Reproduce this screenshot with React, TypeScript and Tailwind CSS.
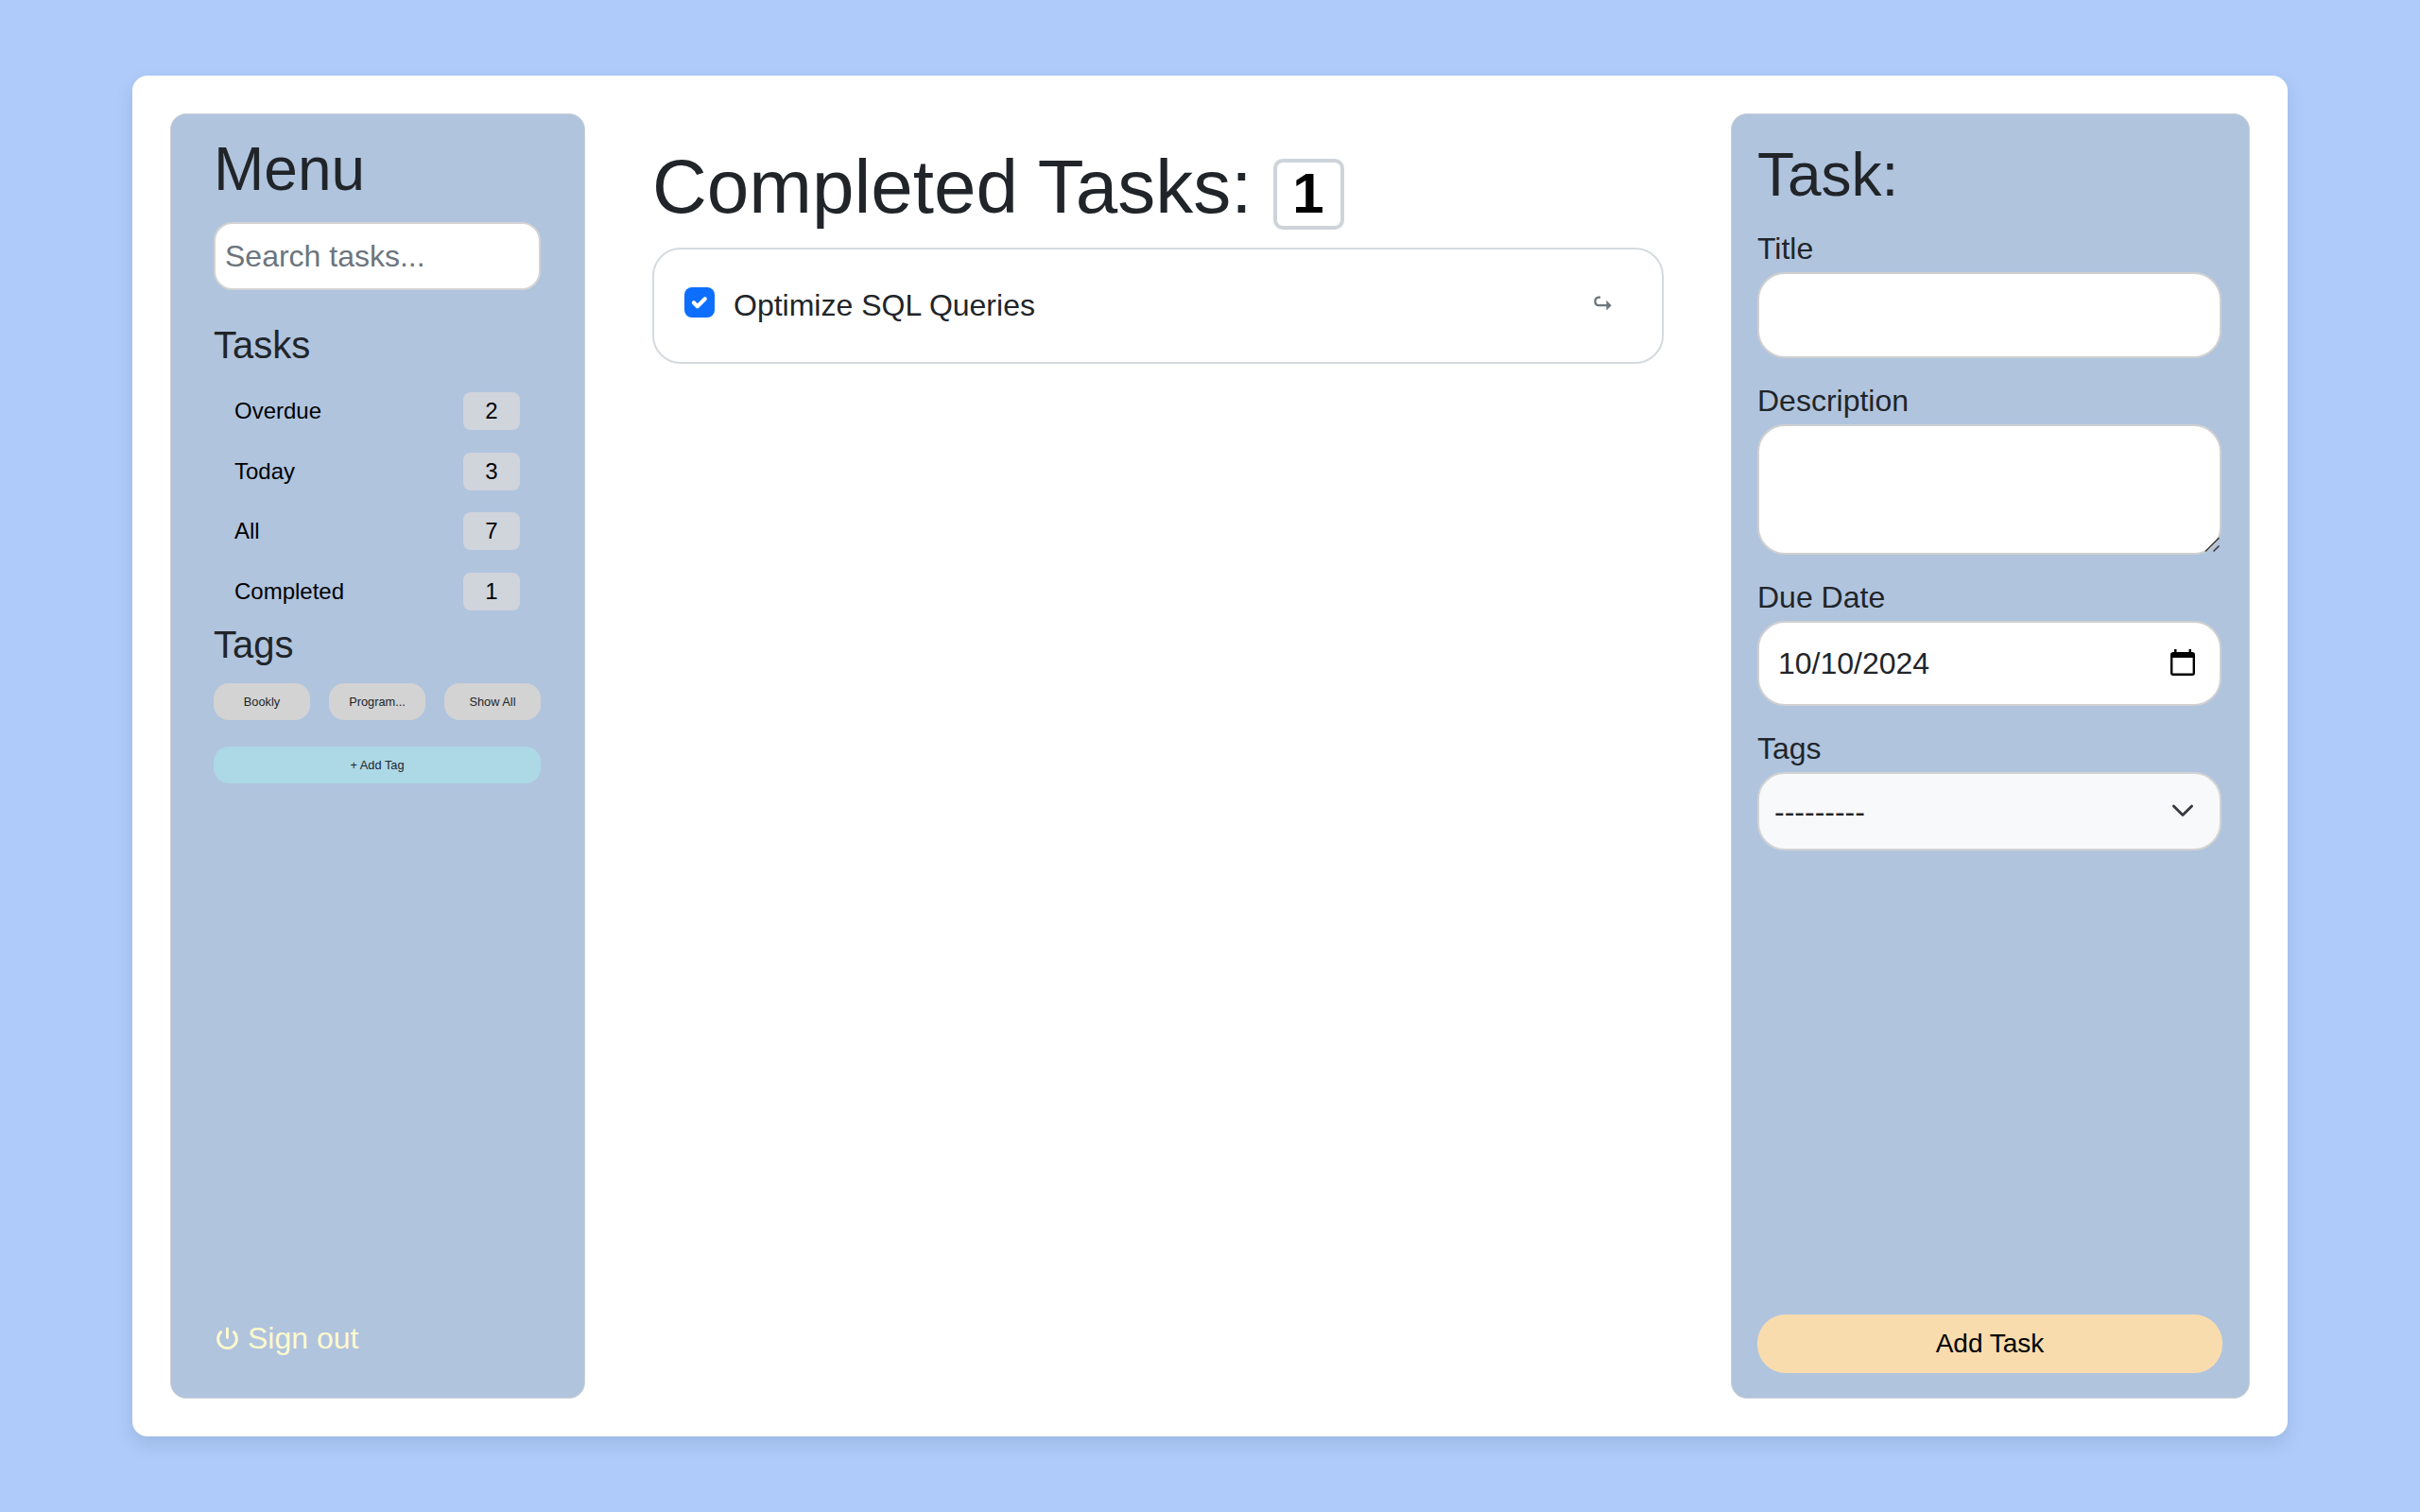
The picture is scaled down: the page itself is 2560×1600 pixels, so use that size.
import React from "react";

const counts = [
  { label: "Overdue", n: 2 },
  { label: "Today", n: 3 },
  { label: "All", n: 7 },
  { label: "Completed", n: 1 },
];
const tags = ["Bookly", "Program...", "Show All"];

function Sidebar() {
  return (
    <aside className="flex h-[1360px] w-[439px] flex-col rounded-[17px] border border-[#cdd0d6] bg-[#b0c4de] px-[45px]">
      <h2 className="mt-[20px] h-[77px] text-[64px] leading-[77px]">Menu</h2>
      <input
        className="mt-[17px] h-[72px] w-[346px] rounded-[20px] border-2 border-[#d3d3d3] bg-white px-[10px] text-[32px] placeholder:text-[#6c757d] placeholder:opacity-100"
        placeholder="Search tasks..."
      />
      <h5 className="mt-[34px] h-[48px] text-[40px] leading-[48px]">Tasks</h5>
      <ul className="mt-[26px] flex flex-col gap-[23.7px] pr-[23px] pl-[22px] text-[24px] text-black">
        {counts.map((c) => (
          <li key={c.label} className="flex h-10 items-center justify-between">
            <span>{c.label}</span>
            <span className="flex h-10 w-[60px] items-center justify-center rounded-[8px] bg-[#d0d4db]">{c.n}</span>
          </li>
        ))}
      </ul>
      <h5 className="mt-[12px] h-[48px] text-[40px] leading-[48px]">Tags</h5>
      <div className="mt-[17px] grid w-[346px] grid-cols-3 gap-5 text-center text-[12.8px] leading-[39px]">
        {tags.map((t) => (
          <div key={t} className="h-[39px] rounded-[16px] bg-[#d3d3d3]">{t}</div>
        ))}
      </div>
      <button className="mt-[28px] h-[39px] w-[346px] rounded-[16px] bg-[#add8e6] text-[12.8px]">+ Add Tag</button>
      <div className="mt-auto mb-[39px] flex h-[48px] items-center gap-[9px] pl-[2px] text-[32px] text-[#fffacd]">
        <svg className="h-[24px] w-[25px]" viewBox="0 0 25 24" fill="none" stroke="currentColor" strokeWidth="2.9" strokeLinecap="round">
          <path d="M12.5 2v9.5M5.6 5.6a9.9 9.9 0 1 0 13.8 0" />
        </svg>
        Sign out
      </div>
    </aside>
  );
}

function Main() {
  return (
    <main className="ml-[71px] w-[1070px] pt-[48px]">
      <div className="flex h-[75px] items-start">
        <h1 className="-mt-[8px] text-[80px] leading-[75px]">Completed Tasks:</h1>
        <span className="ml-[23px] flex size-[75px] items-center justify-center rounded-[10px] border-4 border-[#ced4da] text-[60px] leading-none font-bold text-black">
          <span className="-mt-[2px] -ml-[2px]">1</span>
        </span>
      </div>
      <div className="mt-[19px] flex h-[123px] items-center rounded-[30px] border-2 border-[#d5dade] pr-[53px] pl-[32px]">
        <span className="-mt-[7px] flex size-8 items-center justify-center rounded-[8px] bg-[#0d6efd]">
          <svg className="size-[32px]" viewBox="0 0 20 20" fill="none" stroke="#fff" strokeWidth="2.6" strokeLinecap="round" strokeLinejoin="round">
            <path d="m6.2 10.2 2.4 2.4 5-5" />
          </svg>
        </span>
        <span className="-mt-px ml-[20px] text-[32px]">Optimize SQL Queries</span>
        <svg className="-mt-[5px] ml-auto h-[16px] w-[20px] text-[#6c757d]" viewBox="0 0 20 16" fill="none" stroke="currentColor" strokeWidth="2.2">
          <path d="M8 1.6H5.8a4.4 4.4 0 0 0 0 8.6H15" />
          <path d="M14.4 4.8l5.2 5.4-5.2 5.4z" fill="currentColor" stroke="none" />
        </svg>
      </div>
    </main>
  );
}

function TaskForm() {
  const label = "text-[32px] leading-[40px] h-[40px]";
  return (
    <section className="ml-[71px] flex h-[1360px] w-[549px] flex-col rounded-[17px] border border-[#cdd0d6] bg-[#b0c4de] pr-[28px] pl-[27px]">
      <h2 className="mt-[26px] h-[77px] text-[64px] leading-[77px]">Task:</h2>
      <div className={label + " mt-[19px]"}>Title</div>
      <div className="mt-[5px] h-[91px] w-[491px] rounded-[29px] border-2 border-[#d0d0d0] bg-white" />
      <div className={label + " mt-[25px]"}>Description</div>
      <div className="relative mt-[5px] h-[138px] w-[491px] rounded-[29px] border-2 border-[#d0d0d0] bg-white">
        <svg className="absolute right-0 bottom-0 h-[18px] w-[18px]" viewBox="0 0 18 18" stroke="#444" strokeWidth="1.7">
          <path d="M3 16.5 17.5 2" />
          <path d="M11.5 16.5l6-6" />
        </svg>
      </div>
      <div className={label + " mt-[25px]"}>Due Date</div>
      <div className="mt-[5px] flex h-[90px] w-[491px] items-center justify-between rounded-[29px] border-2 border-[#d0d0d0] bg-white pr-[26px] pl-[20px] text-[32px]">
        10/10/2024
        <svg className="-mt-[2px] h-[28px] w-[26px]" viewBox="0 0 26 28" fill="#000">
          <path fillRule="evenodd" d="M4 0h2.5v3h13V0H22v3h1a3 3 0 0 1 3 3v19a3 3 0 0 1-3 3H3a3 3 0 0 1-3-3V6a3 3 0 0 1 3-3h1zM2.4 9v16.6h21.2V9z" />
        </svg>
      </div>
      <div className={label + " mt-[25px]"}>Tags</div>
      <div className="mt-[5px] flex h-[83px] w-[491px] items-center justify-between rounded-[29px] border-2 border-[#d3d3d3] bg-[#f8f9fa] pr-[27px] pl-[16px] text-[32px]">
        ---------
        <svg className="-mt-[2px] h-[14px] w-[24px]" viewBox="0 0 24 14" fill="none" stroke="#343a40" strokeWidth="2.8" strokeLinecap="round" strokeLinejoin="round">
          <path d="m2.4 2 9.6 9.6L21.6 2" />
        </svg>
      </div>
      <button className="mt-auto mb-[26px] h-[62px] w-[492px] rounded-[30px] bg-[#f9dcae] text-[28px] text-black">Add Task</button>
    </section>
  );
}

export default function App() {
  return (
    <div className="h-[1600px] w-[2560px] overflow-hidden bg-[#aecbfa] px-[140px] pt-[80px] font-['Liberation_Sans',Arial,sans-serif] text-[#212529]">
      <div className="flex h-[1440px] w-[2280px] rounded-[16px] bg-white p-10 shadow-[0_8px_20px_rgba(0,0,0,0.1)]">
        <Sidebar />
        <Main />
        <TaskForm />
      </div>
    </div>
  );
}
